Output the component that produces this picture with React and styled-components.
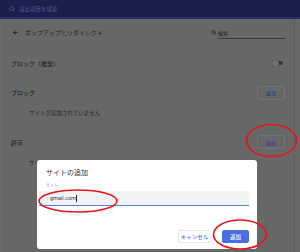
import React from "react"
import styled, { createGlobalStyle } from "styled-components"
import { ArrowLeft, Search } from "lucide-react"

const GlobalStyle = createGlobalStyle`
	html, body {
		margin: 0;
		padding: 0;
		background: #666666;
	}
	* {
		box-sizing: border-box;
	}
`

const jp = `"Noto Sans CJK JP", "Noto Sans", sans-serif`

const Screen = styled.div`
	position: relative;
	width: 300px;
	height: 252px;
	overflow: hidden;
	display: flex;
	flex-direction: column;
	background: #676767;
	font-family: ${ jp };
	color: #222222;
`

const TopBar = styled.div`
	height: 19px;
	flex: none;
	display: flex;
	align-items: center;
	gap: 4px;
	padding: 1px 0 0 9px;
	background: #1b1f4d;
	border-bottom: 2px solid #262d6c;
	color: #50558a;
	font-size: 5.5px;
`

const Body = styled.div`
	flex: 1;
	display: flex;
`

const Main = styled.div`
	flex: 1;
	display: flex;
	flex-direction: column;
	padding: 0 9px 0 10px;
	border-left: 1px solid #6c6c6c;
`

const ScrollTrack = styled.div`
	width: 6px;
	flex: none;
	border-left: 1px solid #5c5c5c;
	background: #696969;
`

const Header = styled.div`
	height: 26px;
	display: flex;
	align-items: center;
	gap: 6px;
	padding-left: 1px;
	font-size: 6px;
	color: #262626;
`

const Title = styled.span`
	flex: 1;
`

const SearchField = styled.div`
	width: 74px;
	height: 12px;
	display: flex;
	align-items: center;
	gap: 2px;
	color: #222222;
	font-size: 5px;
	margin-top: 1px;
`

const SearchInput = styled.div`
	flex: 1;
	height: 100%;
	display: flex;
	align-items: center;
	border-bottom: 1px solid #3a3a3a;
`

const Row = styled.div`
	height: ${ p => p.$h }px;
	padding-top: ${ p => p.$pt || 0 }px;
	display: flex;
	align-items: center;
	justify-content: space-between;
	font-size: 6px;
	font-weight: 500;
	color: #262626;
`

const EmptyNote = styled.div`
	height: 18px;
	display: flex;
	align-items: center;
	padding-left: 18px;
	font-size: 5.5px;
	color: #2a2a2a;
`

const OutlineButton = styled.div`
	width: 28px;
	height: 14px;
	display: flex;
	align-items: center;
	justify-content: center;
	border: 1px solid #747474;
	border-radius: 2px;
	color: #33408e;
	font-size: 5px;
	font-weight: 500;
`

const Toggle = styled.div`
	position: relative;
	width: 10px;
	height: 4px;
	margin-right: 2px;
	border-radius: 2px;
	background: #3a3a3a;

	&::before {
		content: "";
		position: absolute;
		left: -1px;
		top: -1.5px;
		width: 7px;
		height: 7px;
		border-radius: 50%;
		background: #6f6f6f;
		box-shadow: 0 0 1px rgba(0, 0, 0, 0.6);
	}
`

const Dialog = styled.div`
	position: absolute;
	left: 37px;
	top: 160px;
	width: 220px;
	height: 89px;
	background: #ffffff;
	border-radius: 3px;
	display: flex;
	flex-direction: column;
	padding: 7px 8px 6px 2px;
`

const DialogTitle = styled.div`
	height: 10px;
	line-height: 10px;
	padding-left: 7px;
	font-size: 7px;
	color: #303134;
`

const FieldLabel = styled.div`
	margin-top: 5px;
	height: 6px;
	line-height: 6px;
	padding-left: 7px;
	font-size: 4px;
	color: #7b8ce6;
`

const TextInput = styled.div`
	margin-top: 3px;
	height: 15px;
	display: flex;
	align-items: center;
	padding-left: 11px;
	background: #f1f3f4;
	border-bottom: 1px solid #5b7ae6;
	border-radius: 2px 2px 0 0;
	font-family: Roboto, "Liberation Sans", sans-serif;
	font-size: 5.5px;
	color: #3c4043;
`

const Caret = styled.span`
	width: 0.6px;
	height: 7px;
	margin-left: 0.5px;
	background: #202124;
`

const Actions = styled.div`
	margin-top: auto;
	display: flex;
	justify-content: flex-end;
	gap: 11px;
`

const DialogButton = styled.div`
	width: ${ p => p.$w }px;
	height: 13px;
	display: flex;
	align-items: center;
	justify-content: center;
	border-radius: 2px;
	font-size: 5.5px;
	font-weight: 500;
	border: 1px solid ${ p => p.$primary ? "#4b6de4" : "#e6e8ec" };
	background: ${ p => p.$primary ? "#4b6de4" : "#ffffff" };
	color: ${ p => p.$primary ? "#ffffff" : "#5a78e0" };
`

const Marks = styled.svg`
	position: absolute;
	left: 0;
	top: 0;
	pointer-events: none;
`

const App = () => {
	return (
		<>
			<GlobalStyle/>
			<Screen>
				<TopBar>
					<Search size={ 6 } strokeWidth={ 3 } color="#50558a"/>
					<span>設定項目を検索</span>
				</TopBar>
				<Body>
					<Main>
						<Header>
							<ArrowLeft size={ 7 } strokeWidth={ 3 } color="#222222"/>
							<Title>ポップアップとリダイレクト</Title>
							<SearchField>
								<Search size={ 5 } strokeWidth={ 3.5 } color="#222222"/>
								<SearchInput>検索</SearchInput>
							</SearchField>
						</Header>
						<Row $h={ 36 }>
							<span>ブロック（推奨）</span>
							<Toggle/>
						</Row>
						<Row $h={ 23 }>
							<span>ブロック</span>
							<OutlineButton>追加</OutlineButton>
						</Row>
						<EmptyNote>サイトが追加されていません</EmptyNote>
						<Row $h={ 32 } $pt={ 8 }>
							<span>許可</span>
							<OutlineButton>追加</OutlineButton>
						</Row>
						<EmptyNote>サイトが追加されていません</EmptyNote>
					</Main>
					<ScrollTrack/>
				</Body>
				<Dialog>
					<DialogTitle>サイトの追加</DialogTitle>
					<FieldLabel>サイト</FieldLabel>
					<TextInput>
						gmail.com<Caret/>
					</TextInput>
					<Actions>
						<DialogButton $w={ 33 }>キャンセル</DialogButton>
						<DialogButton $w={ 27 } $primary>追加</DialogButton>
					</Actions>
				</Dialog>
				<Marks width="300" height="252" viewBox="0 0 300 252">
					<g fill="none" stroke="#e8141b" strokeWidth="1.6">
						<ellipse cx="271.5" cy="140.5" rx="25" ry="16"/>
						<ellipse cx="78" cy="201" rx="39" ry="11"/>
						<ellipse cx="240" cy="234.5" rx="26.5" ry="14.5"/>
					</g>
				</Marks>
			</Screen>
		</>
	)
}

export default App
